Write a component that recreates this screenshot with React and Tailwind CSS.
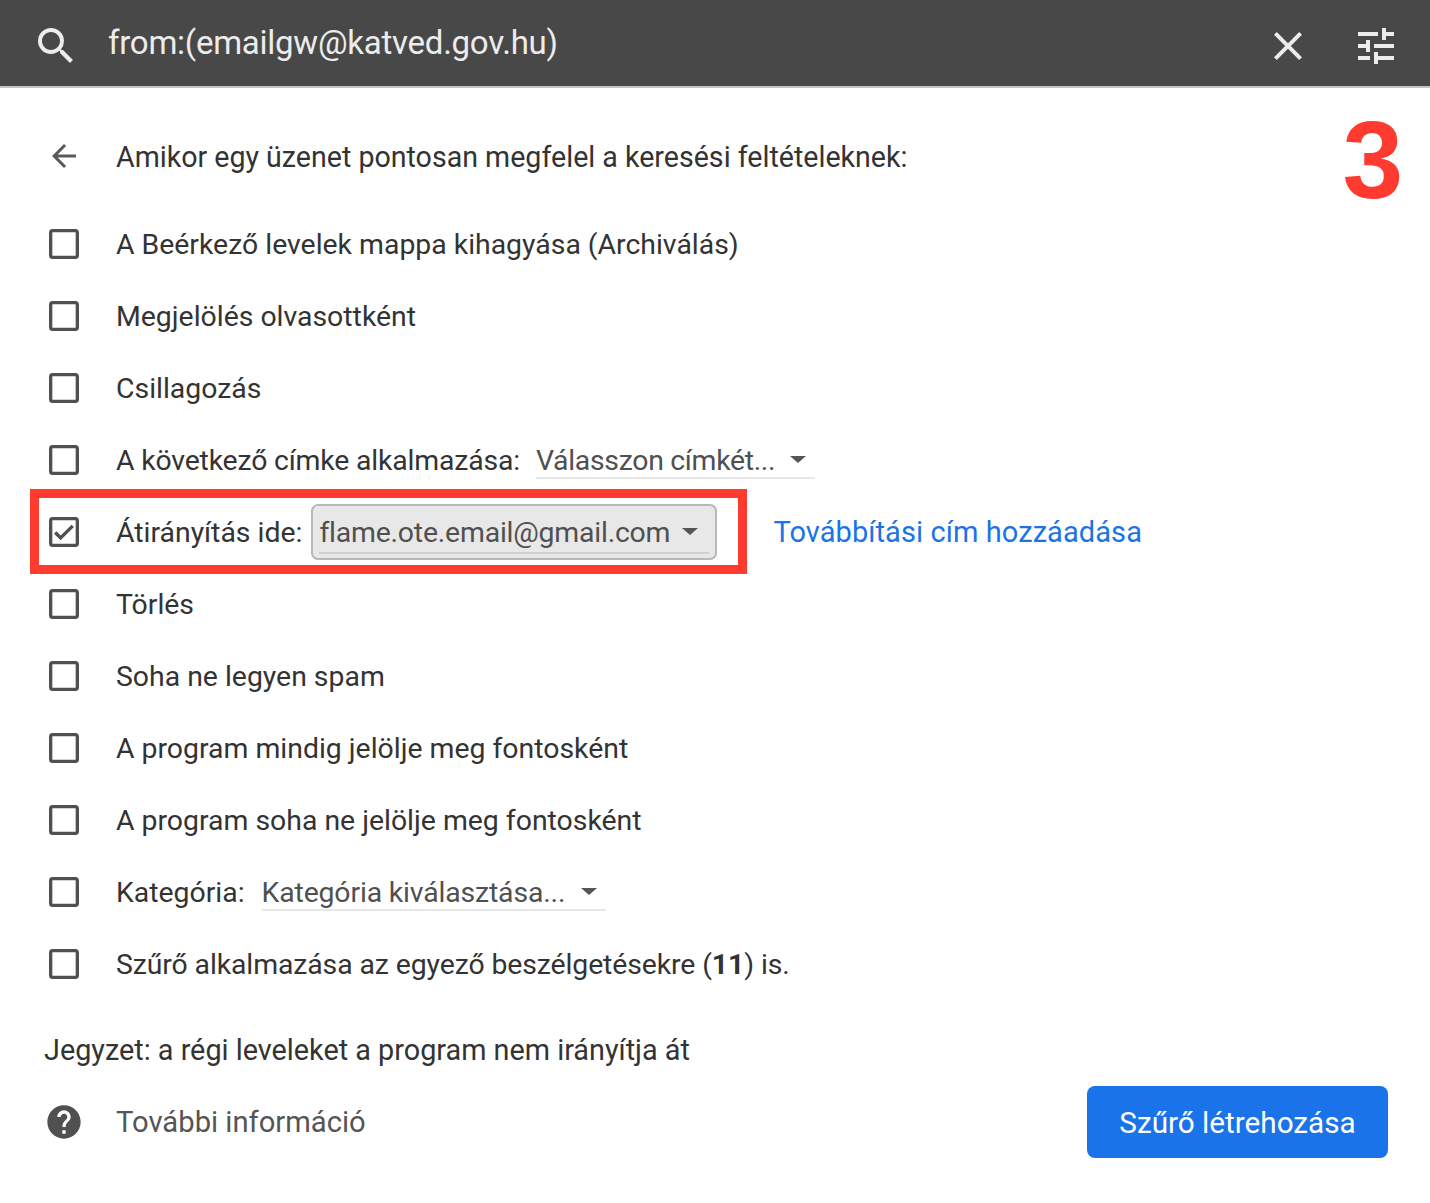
const PATHS = {
  search: "M15.5 14h-.79l-.28-.27A6.471 6.471 0 0 0 16 9.5 6.5 6.5 0 1 0 9.5 16c1.61 0 3.09-.59 4.23-1.57l.27.28v.79l5 4.99L20.49 19l-4.99-5zm-6 0C7.01 14 5 11.99 5 9.5S7.01 5 9.5 5 14 7.01 14 9.5 11.99 14 9.5 14z",
  close: "M19 6.41L17.59 5 12 10.59 6.41 5 5 6.41 10.59 12 5 17.59 6.41 19 12 13.41 17.59 19 19 17.59 13.41 12z",
  tune: "M3 17v2h6v-2H3zM3 5v2h10V5H3zm10 16v-2h8v-2h-8v-2h-2v6h2zM7 9v2H3v2h4v2h2V9H7zm14 4v-2H11v2h10zm-6-4h2V7h4V5h-4V3h-2v6z",
  back: "M20 11H7.83l5.59-5.59L12 4l-8 8 8 8 1.41-1.41L7.83 13H20v-2z",
  box: "M19 5v14H5V5h14m0-2H5c-1.1 0-2 .9-2 2v14c0 1.1.9 2 2 2h14c1.1 0 2-.9 2-2V5c0-1.1-.9-2-2-2z",
  checked: "M19 3H5c-1.11 0-2 .9-2 2v14c0 1.1.89 2 2 2h14c1.11 0 2-.9 2-2V5c0-1.1-.89-2-2-2zm0 16H5V5h14v14zM17.99 9l-1.41-1.42-6.59 6.59-2.58-2.57-1.42 1.41 4 3.99z",
  help: "M12 2C6.48 2 2 6.48 2 12s4.48 10 10 10 10-4.48 10-10S17.52 2 12 2zm1 17h-2v-2h2v2zm2.07-7.75l-.9.92C13.45 12.9 13 13.5 13 15h-2v-.5c0-1.1.45-2.1 1.17-2.83l1.24-1.26c.37-.36.59-.86.59-1.41 0-1.1-.9-2-2-2s-2 .9-2 2H8c0-2.21 1.79-4 4-4s4 1.79 4 4c0 .88-.36 1.68-.93 2.25z",
};

function Icon({ name, className }) {
  return (
    <svg viewBox="0 0 24 24" fill="currentColor" className={className}>
      <path d={PATHS[name]} />
    </svg>
  );
}

function Caret({ className }) {
  return <span className={`h-0 w-0 border-x-[8px] border-t-[7px] border-x-transparent border-t-[#555] ${className}`} />;
}

function Label({ className = "", children }) {
  return <span className={`pt-[2px] ${className}`}>{children}</span>;
}

function Row({ checked, children }) {
  return (
    <div className="relative flex h-[72px] items-center pl-[44px]">
      <Icon name={checked ? "checked" : "box"} className="mr-[32px] h-[40px] w-[40px] shrink-0 text-[#505050]" />
      {children}
    </div>
  );
}

function Dropdown({ label, className }) {
  return (
    <div className={`flex h-[38px] items-center justify-between border-b-2 border-[#e8e8e8] pt-[4px] text-[#505050] ${className}`}>
      <span>{label}</span>
      <Caret className="mr-[9px] mb-[4px]" />
    </div>
  );
}

const PLAIN_ROWS_TOP = ["A Beérkező levelek mappa kihagyása (Archiválás)", "Megjelölés olvasottként", "Csillagozás"];
const PLAIN_ROWS_BOTTOM = ["Törlés", "Soha ne legyen spam", "A program mindig jelölje meg fontosként", "A program soha ne jelölje meg fontosként"];

export default function App() {
  return (
    <div className="relative min-h-[1203px] bg-white font-['Roboto',sans-serif] text-[28.4px] text-[#333]">
      <header className="flex h-[88px] items-center border-b-2 border-[#c4c4c4] bg-[#484848] text-[#ececec]">
        <Icon name="search" className="ml-[32px] mt-[6px] h-[48px] w-[48px] shrink-0" />
        <span className="ml-[28px] flex-1 text-[33px] tracking-[-0.25px]">from:(emailgw@katved.gov.hu)</span>
        <Icon name="close" className="mr-[40px] mt-[6px] h-[48px] w-[48px]" />
        <Icon name="tune" className="mr-[30px] mt-[6px] h-[48px] w-[48px]" />
      </header>

      <span className="absolute right-[27px] top-[95px] font-['Liberation_Sans',sans-serif] text-[109px] font-bold leading-[130px] text-[#ff3b30]">3</span>

      <div className="mb-4 mt-[32px] flex h-[72px] items-center pl-[46px]">
        <Icon name="back" className="mr-[34px] h-[36px] w-[36px] text-[#5a5a5a]" />
        <Label className="text-[28.6px]">Amikor egy üzenet pontosan megfelel a keresési feltételeknek:</Label>
      </div>

      {PLAIN_ROWS_TOP.map((text) => (
        <Row key={text}>
          <Label>{text}</Label>
        </Row>
      ))}

      <Row>
        <Label className="tracking-[-0.17px]">A következő címke alkalmazása:</Label>
        <Dropdown label="Válasszon címkét..." className="ml-[16px] w-[279px] tracking-[-0.3px]" />
      </Row>

      <Row checked>
        <Label>Átirányítás ide:</Label>
        <div className="ml-[9px] flex h-[56px] w-[406px] items-center rounded-[7px] border-2 border-[#b8b8b8] bg-[#e8e8e8] px-[6px] text-[#505050]">
          <div className="flex h-[44px] w-full items-center justify-between border-b-2 border-[#d0d0d0] pt-[4px] tracking-[-0.2px]">
            <span>flame.ote.email@gmail.com</span>
            <Caret className="mr-[11px] mb-[4px]" />
          </div>
        </div>
        <a className="ml-[56px] pt-[2px] text-[29px] tracking-[0.08px] text-[#1a73e8]">Továbbítási cím hozzáadása</a>
        <div className="absolute left-[30px] top-[-7px] h-[85px] w-[717px] border-[9px] border-[#ff3b30]" />
      </Row>

      {PLAIN_ROWS_BOTTOM.map((text) => (
        <Row key={text}>
          <Label>{text}</Label>
        </Row>
      ))}

      <Row>
        <Label>Kategória:</Label>
        <Dropdown label="Kategória kiválasztása..." className="ml-[17px] w-[344px] tracking-[-0.15px]" />
      </Row>

      <Row>
        <Label className="tracking-[-0.1px]">
          Szűrő alkalmazása az egyező beszélgetésekre (<b>11</b>) is.
        </Label>
      </Row>

      <div className="mt-[14px] flex h-[72px] items-center pl-[44px]">
        <Label className="text-[28.8px]">Jegyzet: a régi leveleket a program nem irányítja át</Label>
      </div>

      <div className="flex h-[72px] items-center pl-[44px] pr-[42px]">
        <Icon name="help" className="mr-[32px] h-[40px] w-[40px] text-[#505050]" />
        <Label className="flex-1 text-[29.2px] text-[#555]">További információ</Label>
        <button className="h-[72px] w-[301px] rounded-[8px] bg-[#1a73e8] pt-[2px] text-[29.7px] text-white">Szűrő létrehozása</button>
      </div>
    </div>
  );
}
